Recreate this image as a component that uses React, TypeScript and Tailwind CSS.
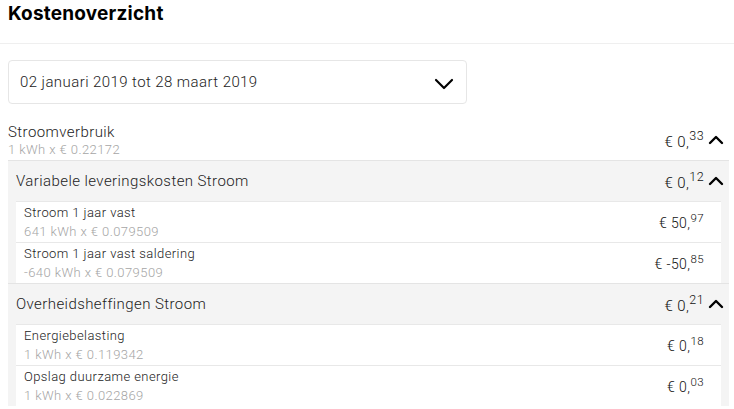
import { ChevronDown, ChevronUp } from 'lucide-react';

type Line = { title: string; sub: string; euro: string; cents: string };

const groups: { title: string; euro: string; cents: string; lines: Line[] }[] = [
    {
        title: 'Variabele leveringskosten Stroom',
        euro: '0',
        cents: '12',
        lines: [
            { title: 'Stroom 1 jaar vast', sub: '641 kWh x € 0.079509', euro: '50', cents: '97' },
            { title: 'Stroom 1 jaar vast saldering', sub: '-640 kWh x € 0.079509', euro: '-50', cents: '85' },
        ],
    },
    {
        title: 'Overheidsheffingen Stroom',
        euro: '0',
        cents: '21',
        lines: [
            { title: 'Energiebelasting', sub: '1 kWh x € 0.119342', euro: '0', cents: '18' },
            { title: 'Opslag duurzame energie', sub: '1 kWh x € 0.022869', euro: '0', cents: '03' },
        ],
    },
];

function Amount({ euro, cents, size }: { euro: string; cents: string; size: 'lg' | 'sm' }) {
    return (
        <span className={size === 'lg' ? 'text-[15px] text-[#111] whitespace-nowrap' : 'text-[14px] text-[#111] whitespace-nowrap'}>
            € {euro},<sup className={size === 'lg' ? 'text-[12.5px] top-[-0.55em]' : 'text-[11.5px] top-[-0.55em]'}>{cents}</sup>
        </span>
    );
}

export default function App() {
    return (
        <div className="w-full h-[409px] bg-white overflow-hidden tracking-[0.42px] font-light" style={{ fontFamily: 'Roboto, "Liberation Sans", sans-serif' }}>
            {/* Header */}
            <div className="h-[44px] border-b border-[#efefef] px-2 pt-[2px]">
                <h1 className="text-[19px] leading-[24px] font-bold text-black tracking-[0.2px]" style={{ fontFamily: 'Inter, "Noto Sans", sans-serif' }}>
                    Kostenoverzicht
                </h1>
            </div>

            {/* Period select */}
            <div className="ml-2 mt-4 w-[459px] h-[44px] border border-[#e6e6e6] rounded-[4px] flex items-center justify-between pl-[11px] pr-[6px]">
                <span className="text-[15px] text-[#222]">02 januari 2019 tot 28 maart 2019</span>
                <ChevronDown className="w-8 h-8 text-black mt-1" strokeWidth={1.6} />
            </div>

            {/* Cost list */}
            <div className="ml-2 mt-4 w-[721px]">
                <div className="h-[40px] flex items-center justify-between pr-[1px]">
                    <div className="flex flex-col">
                        <span className="text-[15px] leading-[18px] text-[#222]">Stroomverbruik</span>
                        <span className="text-[13px] leading-[17px] text-[#a5a5a5]">1 kWh x € 0.22172</span>
                    </div>
                    <div className="flex items-center pt-[4px]">
                        <Amount euro="0" cents="33" size="lg" />
                        <ChevronUp className="w-6 h-6 text-black -mt-1" strokeWidth={2.4} />
                    </div>
                </div>

                {groups.map((g) => (
                    <div key={g.title} className="bg-[#f4f4f4] border-t border-[#e4e4e4]">
                        <div className="h-[40px] flex items-center justify-between pl-2 pr-[1px]">
                            <span className="text-[15px] text-[#222]">{g.title}</span>
                            <div className="flex items-center pt-[4px]">
                                <Amount euro={g.euro} cents={g.cents} size="lg" />
                                <ChevronUp className="w-6 h-6 text-black -mt-1" strokeWidth={2.4} />
                            </div>
                        </div>
                        <div className="pl-2 pr-2">
                            {g.lines.map((l) => (
                                <div key={l.title} className="h-[41px] bg-white border-t border-[#e8e8e8] flex items-center justify-between pl-2 pr-[17px]">
                                    <div className="flex flex-col">
                                        <span className="text-[13px] leading-[19px] text-[#222]">{l.title}</span>
                                        <span className="text-[13px] leading-[19px] text-[#a5a5a5]">{l.sub}</span>
                                    </div>
                                    <div className="pt-[2px]">
                                        <Amount euro={l.euro} cents={l.cents} size="sm" />
                                    </div>
                                </div>
                            ))}
                        </div>
                    </div>
                ))}
            </div>
        </div>
    );
}
